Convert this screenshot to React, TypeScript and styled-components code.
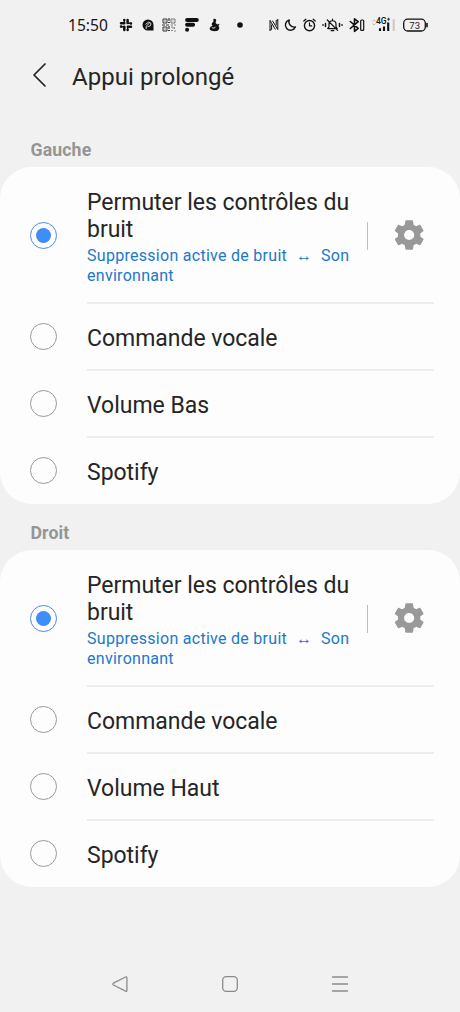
import React from "react";
import styled, { createGlobalStyle } from "styled-components";

const GlobalStyle = createGlobalStyle`
  * { box-sizing: border-box; }
  body { margin: 0; background: #f1f1f1; font-family: Roboto, sans-serif; }
`;

const Screen = styled.div`
  width: 460px;
  height: 1012px;
  display: flex;
  flex-direction: column;
  background: #f1f1f1;
  color: #252525;
  overflow: hidden;
`;

const StatusBar = styled.header`
  height: 50px;
  display: flex;
  align-items: center;
  padding: 0 31px 0 68px;
`;

const Clock = styled.time`
  width: 51px;
  font: 400 15.6px/20px "Noto Sans", sans-serif;
  color: #151515;
`;

const Glyph = styled.svg<{ $w: number; $gap?: number }>`
  width: ${(p) => p.$w}px;
  height: 16px;
  flex: none;
  margin-right: ${(p) => p.$gap ?? 0}px;
  overflow: visible;
  fill: none;
  stroke: #111;
  stroke-width: 1.4;
  stroke-linecap: round;
  stroke-linejoin: round;
`;

const Header = styled.div`
  height: 54px;
  display: flex;
  align-items: center;
  padding-left: 32px;
`;

const BackIcon = styled.svg`
  width: 15px;
  height: 26px;
  margin-right: 25px;
  margin-top: -4px;
  fill: none;
  stroke: #222;
  stroke-width: 1.7;
  stroke-linecap: round;
  stroke-linejoin: round;
`;

const Title = styled.h1`
  margin: 0;
  font-size: 24px;
  line-height: 28px;
  font-weight: 400;
  letter-spacing: 0.05px;
`;

const Section = styled.section<{ $labelHeight: number }>`
  display: grid;
  grid-template-rows: ${(p) => p.$labelHeight}px 337px;
`;

const SectionLabel = styled.h2`
  margin: 0;
  align-self: end;
  padding: 0 30.5px 7px;
  font-size: 17.7px;
  line-height: 20px;
  font-weight: 700;
  letter-spacing: 0.12px;
  color: #959595;
`;

const Card = styled.div`
  display: flex;
  flex-direction: column;
  background: #fdfdfd;
  border-radius: 32px;
`;

const Row = styled.div<{ $tall?: boolean }>`
  height: ${(p) => (p.$tall ? 136 : 67)}px;
  display: flex;
  padding: 0 26px 0 30px;
`;

const Radio = styled.span<{ $checked?: boolean }>`
  width: 27px;
  height: 27px;
  flex: none;
  display: grid;
  place-items: center;
  align-self: center;
  margin-right: 30px;
  border-radius: 50%;
  border: 1.3px solid ${(p) => (p.$checked ? "#4a8be4" : "#999")};
  &::after {
    content: "";
    width: 15px;
    height: 15px;
    border-radius: 50%;
    background: ${(p) => (p.$checked ? "#3f8dfb" : "transparent")};
  }
`;

const RowBody = styled.div<{ $divided?: boolean }>`
  flex: 1;
  display: flex;
  align-items: center;
  margin-top: -1px;
  border-top: 2px solid ${(p) => (p.$divided ? "#ededed" : "transparent")};
`;

const Texts = styled.div`
  width: 280px;
  padding-top: 3px;
`;

const Label = styled.div`
  font-size: 23px;
  line-height: 27px;
  letter-spacing: -0.03px;
  white-space: nowrap;
`;

const Detail = styled.div`
  margin-top: 3px;
  margin-bottom: -1px;
  font-size: 16px;
  line-height: 20px;
  letter-spacing: 0.28px;
  color: #1c78ca;
  white-space: nowrap;
`;

const Arrow = styled.span`
  display: inline-block;
  width: 34px;
  text-align: center;
  font: 16px/16px "Liberation Serif", serif;
`;

const Separator = styled.span`
  width: 1px;
  height: 28px;
  background: #bdbdbd;
`;

const GearIcon = styled.svg`
  width: 36px;
  height: 36px;
  margin: -2px 0 0 23px;
  fill: #999;
`;

const NavBar = styled.nav`
  height: 56px;
  margin-top: auto;
  display: flex;
  align-items: center;
  justify-content: space-between;
  padding: 0 110px;
`;

const NavIcon = styled.svg`
  width: 20px;
  height: 20px;
  fill: none;
  stroke: #8b8b8b;
  stroke-width: 1.3;
  stroke-linecap: round;
  stroke-linejoin: round;
`;

const StatusIcons = () => (
  <>
    <Glyph $w={14} $gap={9} viewBox="0 0 14 16">
      <g strokeWidth="2.5">
        <path d="M5.3 2.9v.1M5.3 6.2H2M8.6 2.9v3.2M11.9 6.4h.1M2 9.6h.1M5.3 9.8v3.3M8.6 13v.1M8.8 9.8H12" />
        <path d="M5.3 3v3.2M8.9 6.3H12M2 9.8h3.3M8.7 9.8v3.3" strokeWidth="1.5" />
      </g>
    </Glyph>
    <Glyph $w={12} $gap={8} viewBox="0 0 12 16">
      <path d="M6 2.5a5.5 5.5 0 1 0 0 11h5.5V8A5.5 5.5 0 0 0 6 2.5z" fill="#111" stroke="none" />
      <path d="M4.2 11.7V9.2L7.5 6M3.8 7.2l3-2.2 2.2 1.4-.6 2.4-2.5.8" stroke="#eee" strokeWidth="0.9" />
    </Glyph>
    <Glyph $w={14} $gap={9} viewBox="0 0 14 16">
      <g stroke="#333" strokeWidth="1" strokeLinecap="butt" strokeLinejoin="miter">
        <path d="M1 2h4v4H1zM1 10h4v4H1z" />
        <path d="M9 2h4v4H9z" stroke="#777" />
        <path d="M2.5 4h1M2.5 12h1M7 1v3M6 5.5h2M0 8h3M4 8h3M7 9v3M6 13.5h2" strokeWidth="1.2" />
        <path d="M10.5 4h1M8.5 8H11M12 8h2M9 10h2v2M12.5 10v2M9 13.5h2M12 14h2" stroke="#888" />
      </g>
    </Glyph>
    <Glyph $w={14} $gap={10} viewBox="0 0 14 16">
      <path d="M2.1 2.9h9.7M2.1 7.8h6M2.1 12.7h.01" strokeWidth="4" />
    </Glyph>
    <Glyph $w={11} $gap={17} viewBox="0 0 11 16">
      <path d="M4.4 2.1c1.3-1 3.1.1 2.8 1.7-.1.9-.9 1.3-.5 2.1.4.7 1.2.8 1.7 1.5l1.7-.7c.7 1-.1 1.9-.9 2.2 2 .7 1.1 4.7-1.7 5.1-1.6.3-5 .3-6.2-.9C.3 11.9.6 10 2 9.4l1.6-.7c-.8-.7-1.3-1.7-.5-2.8.7-.9 1.6-1 1.3-2z" fill="#111" stroke="none" />
      <path d="M3.2 10.7c1 .9 2.7.6 3.2-.5" stroke="#eee" strokeWidth="0.9" />
    </Glyph>
    <Glyph $w={6} $gap={26} viewBox="0 0 6 16">
      <circle cx="3" cy="8" r="2.8" fill="#111" stroke="none" />
    </Glyph>
    <Glyph $w={10} $gap={6} viewBox="0 0 10 16">
      <path d="M1 13.2V3.4l5.2 8.8M8.8 2.8v9.8L3.6 4M1 13.2l1.6-.6V8M8.8 2.8l-1.6.6V8" strokeWidth="1" />
    </Glyph>
    <Glyph $w={11} $gap={7} viewBox="0 0 11 16">
      <path d="M4.2 3A5.4 5.4 0 0 0 10.4 10 5.2 5.2 0 1 1 4.2 3z" />
    </Glyph>
    <Glyph $w={13} $gap={6} viewBox="0 0 13 16">
      <circle cx="6.5" cy="8.6" r="5.1" />
      <path d="M6.5 5.8v3.1h2.2M.8 4l2-1.8M12.2 4l-2-1.8" strokeWidth="1.2" />
    </Glyph>
    <Glyph $w={21} $gap={6} viewBox="0 0 21 16">
      <g strokeWidth="1.2">
        <path d="M5.7 11.6h9.5l-1.2-1.8V7.1c0-4.5-7-4.5-7 0v2.7zM10.5 3V2.2M9.2 13.7h2.6M5.3 3l10.3 10.3" />
        <path d="M3.5 6.5v3M17.5 6.5v3M1 7.8v.4M20 7.8v.4" strokeWidth="1.5" />
      </g>
    </Glyph>
    <Glyph $w={16} $gap={7} viewBox="0 0 16 16">
      <path d="M1.3 4.5l7.9 6.8-3.7 3V1.8l3.7 2.9-7.9 6.8" strokeWidth="1.6" />
      <rect x="11.7" y="3" width="3" height="10.4" rx="1" strokeWidth="1.2" />
    </Glyph>
    <Glyph $w={25} $gap={6} viewBox="0 0 25 16">
      <path d="M.7 4.2L2 2.9l1.3 1.3M.7 6.7L2 8l1.3-1.3" stroke="#bbb" strokeWidth="1" />
      <text x="4" y="6.8" fill="#111" stroke="none" fontFamily="Roboto, sans-serif" fontSize="8.5" fontWeight="500">4G</text>
      <path d="M15.5 2.2h2.2M16.6 1.1v2.2" strokeWidth=".8" />
      <g strokeLinecap="butt" strokeWidth="2.1">
        <path d="M8 11.2V14M12 9.4V14M16.2 5.6V14" />
        <path d="M21.7 2.2V14" stroke="#c9c9c9" />
      </g>
    </Glyph>
    <Glyph $w={25} viewBox="0 0 25 16">
      <rect x=".7" y="2.2" width="21.6" height="11.8" rx="4" strokeWidth="1.3" />
      <path d="M24 6.5v3.2" strokeWidth="1.6" />
      <text x="6.3" y="11.6" fill="#222" stroke="none" fontFamily="Roboto, sans-serif" fontSize="9.5">73</text>
    </Glyph>
  </>
);

const Gear = () => (
  <GearIcon viewBox="0 0 24 24">
    <path fillRule="evenodd" d="M19.5 13a7.8 7.8 0 0 0 0-2l2-1.55c.2-.15.25-.4.12-.64l-1.95-3.38c-.12-.22-.37-.3-.6-.22l-2.3.96a7.5 7.5 0 0 0-1.72-.98l-.38-2.6a.5.5 0 0 0-.5-.42h-4.1a.5.5 0 0 0-.5.42l-.38 2.6a7.5 7.5 0 0 0-1.72.98l-2.3-.96c-.23-.08-.48 0-.6.22L2.62 8.81c-.13.22-.08.49.12.64L4.7 11a8 8 0 0 0 0 2l-1.96 1.55c-.2.15-.25.42-.12.64l1.95 3.38c.12.22.37.3.6.22l2.3-.96c.53.4 1.1.74 1.72.98l.38 2.6c.03.24.24.42.5.42h4.1c.26 0 .47-.18.5-.42l.38-2.6a7.5 7.5 0 0 0 1.72-.98l2.3.96c.23.08.48 0 .6-.22l1.95-3.38a.5.5 0 0 0-.12-.64zM12.1 15.4a3.4 3.4 0 1 1 0-6.8 3.4 3.4 0 0 1 0 6.8z" />
  </GearIcon>
);

const NoiseOption = () => (
  <Row $tall>
    <Radio $checked />
    <RowBody>
      <Texts>
        <Label>Permuter les contrôles du<br />bruit</Label>
        <Detail>Suppression active de bruit<Arrow>↔</Arrow>Son<br />environnant</Detail>
      </Texts>
      <Separator />
      <Gear />
    </RowBody>
  </Row>
);

const SideSection = ({ name, options, labelHeight }: { name: string; options: string[]; labelHeight: number }) => (
  <Section $labelHeight={labelHeight}>
    <SectionLabel>{name}</SectionLabel>
    <Card>
      <NoiseOption />
      {options.map((option) => (
        <Row key={option}>
          <Radio />
          <RowBody $divided>
            <Texts><Label>{option}</Label></Texts>
          </RowBody>
        </Row>
      ))}
    </Card>
  </Section>
);

export default function App() {
  return (
    <Screen>
      <GlobalStyle />
      <StatusBar>
        <Clock>15:50</Clock>
        <StatusIcons />
      </StatusBar>
      <Header>
        <BackIcon viewBox="0 0 15 26"><path d="M13 2L2 13l11 11" /></BackIcon>
        <Title>Appui prolongé</Title>
      </Header>
      <SideSection name="Gauche" labelHeight={63} options={["Commande vocale", "Volume Bas", "Spotify"]} />
      <SideSection name="Droit" labelHeight={46} options={["Commande vocale", "Volume Haut", "Spotify"]} />
      <NavBar>
        <NavIcon viewBox="0 0 20 20"><path d="M16.9 3.8v12.6q0 1.4-1.3.8L3.4 11q-1.2-.9 0-1.8L15.6 3q1.3-.5 1.3.8z" /></NavIcon>
        <NavIcon viewBox="0 0 20 20"><rect x="2.7" y="2.7" width="14.6" height="14.6" rx="3.5" /></NavIcon>
        <NavIcon viewBox="0 0 20 20"><path d="M2.5 3h15M2.5 10h15M2.5 17h15" /></NavIcon>
      </NavBar>
    </Screen>
  );
}
